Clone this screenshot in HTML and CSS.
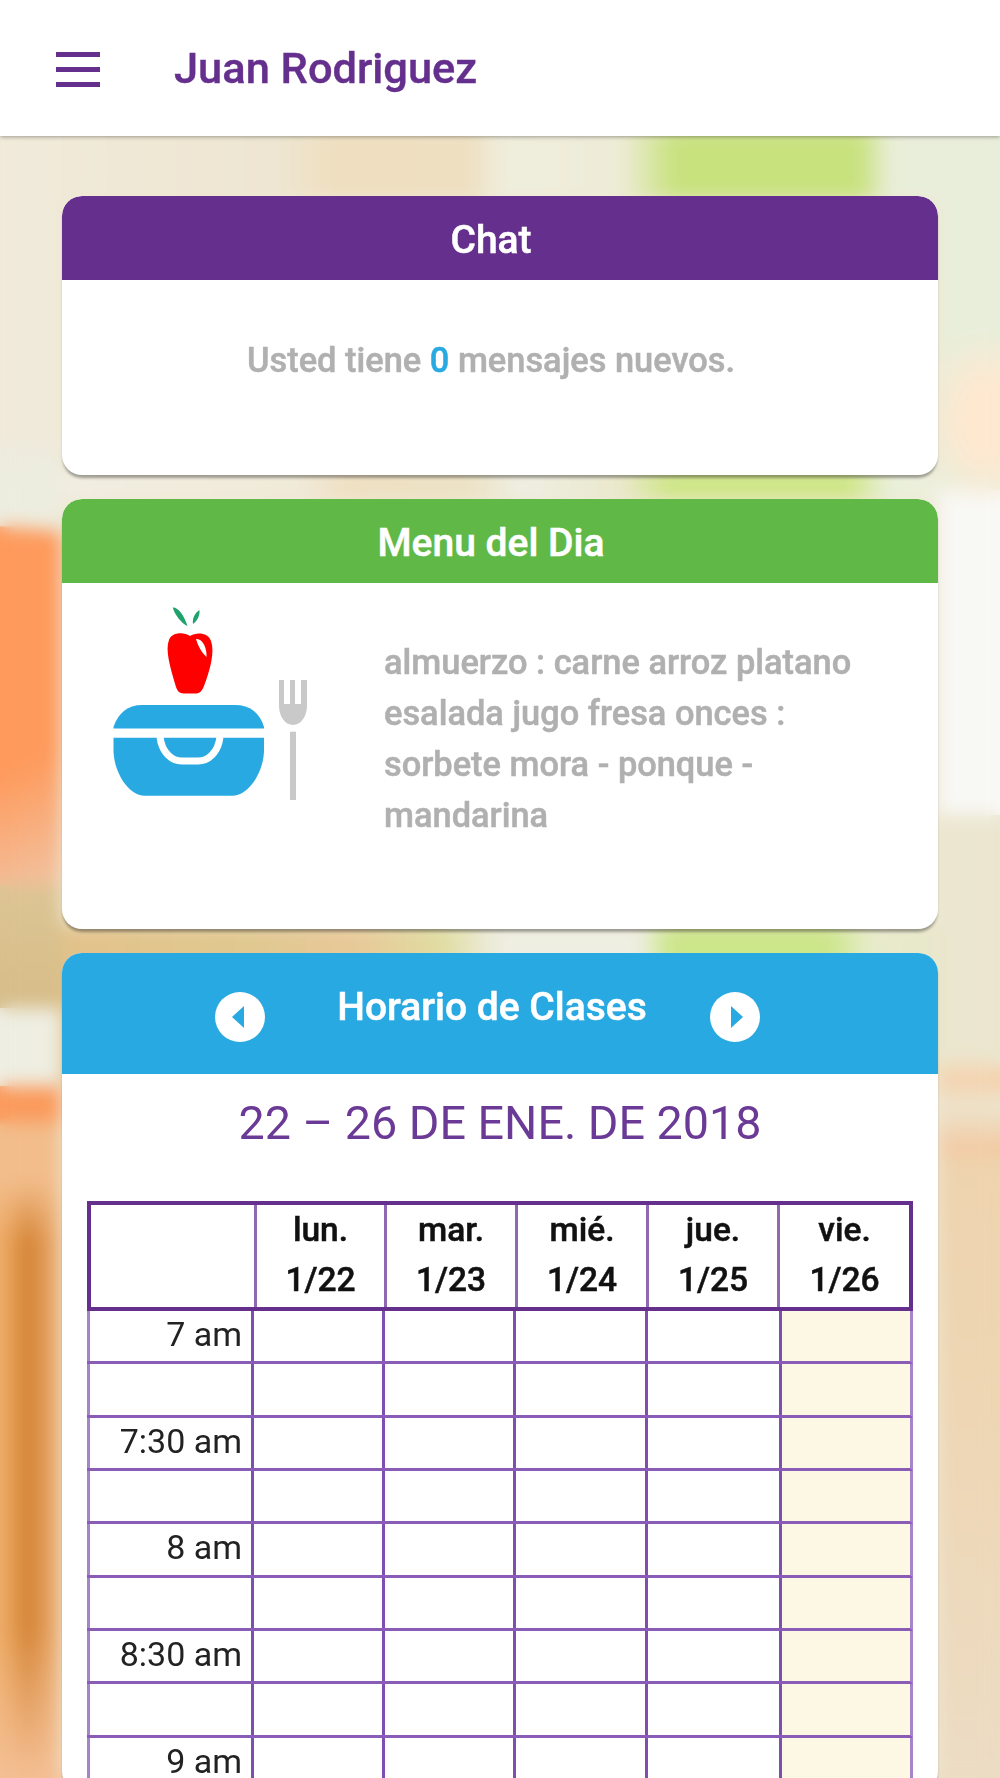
FILE: index.html
```html
<!DOCTYPE html>
<html lang="es">
<head>
    <meta http-equiv="Content-Type" content="text/html; charset=utf-8">
    <meta name="viewport" content="width=device-width, initial-scale=1.0">
    <title>Juan Rodriguez</title>
    <link rel="stylesheet" href="styles.css">
</head>
<body>
    <div class="bg-blur"></div>

    <div class="topbar">
        <div class="burger"><span></span><span></span><span></span></div>
        <span class="topbar-title">Juan Rodriguez</span>
    </div>

    <div class="content">
        <div class="card">
            <div class="card-head head-purple">Chat</div>
            <div class="chat-body">Usted tiene <span class="count">0</span> mensajes nuevos.</div>
        </div>

        <div class="card">
            <div class="card-head head-green">Menu del Dia</div>
            <div class="menu-body">
                <svg class="menu-icon" viewBox="0 0 200 200" width="200" height="200">
                    <path fill="#1fa36b" d="M62.7 2.5C68 2 74 10 77.5 21C71 18 65 10 62.7 2.5Z"/>
                    <path fill="#1fa36b" d="M89.5 5C90 11 87 16 83 19C82 13 85 8 89.5 5Z"/>
                    <path fill="#ff0000" d="M80 31C74 27 62 27 59 35C55 45 60 62 66 82C68 88 71 88.5 75 88.5L85 88.5C90 88.5 92 86 94 81C100 65 105 47 101 36C98 27 86 27 80 31Z"/>
                    <path fill="#ffffff" d="M86 34C92 33 97 42 96.5 52C92 48 88 41 86 34Z"/>
                    <path fill="#29a9e1" d="M3.5 122C8 108 18 100 32 100H125C140 100 150 108 154 122V123.5H3.5Z"/>
                    <path fill="#29a9e1" d="M3.5 132.7H154V145C154 165 140 190.7 122 190.7H35C17 190.7 3.5 165 3.5 145Z"/>
                    <path fill="none" stroke="#ffffff" stroke-width="7" d="M50 132C52 148 62 156 72 156H88C98 156 108 148 110 132"/>
                    <path fill="#c9c9c9" d="M169 75h5v24h6V75h5v24h6V75h6v26c0 10-6 19-14 19s-14-9-14-19z"/>
                    <rect fill="#c9c9c9" x="180" y="126.7" width="6" height="68.3"/>
                </svg>
                <p class="menu-text">almuerzo : carne arroz platano esalada jugo fresa onces : sorbete mora - ponque - mandarina</p>
            </div>
        </div>

        <div class="card">
            <div class="card-head head-blue">
                <span class="round-btn"><span class="arrow-left"></span></span>
                <span class="head-title">Horario de Clases</span>
                <span class="round-btn"><span class="arrow-right"></span></span>
            </div>
            <div class="schedule">
                <h2 class="week-title">22 – 26 DE ENE. DE 2018</h2>

                <div class="day-head">
                    <div class="day-cell"></div>
                    <div class="day-cell">lun.<br>1/22</div>
                    <div class="day-cell">mar.<br>1/23</div>
                    <div class="day-cell">mié.<br>1/24</div>
                    <div class="day-cell">jue.<br>1/25</div>
                    <div class="day-cell">vie.<br>1/26</div>
                </div>

                <div class="time-row"><div class="time-cell">7 am</div><div></div><div></div><div></div><div></div><div class="today"></div></div>
                <div class="time-row"><div class="time-cell"></div><div></div><div></div><div></div><div></div><div class="today"></div></div>
                <div class="time-row"><div class="time-cell">7:30 am</div><div></div><div></div><div></div><div></div><div class="today"></div></div>
                <div class="time-row"><div class="time-cell"></div><div></div><div></div><div></div><div></div><div class="today"></div></div>
                <div class="time-row"><div class="time-cell">8 am</div><div></div><div></div><div></div><div></div><div class="today"></div></div>
                <div class="time-row"><div class="time-cell"></div><div></div><div></div><div></div><div></div><div class="today"></div></div>
                <div class="time-row"><div class="time-cell">8:30 am</div><div></div><div></div><div></div><div></div><div class="today"></div></div>
                <div class="time-row"><div class="time-cell"></div><div></div><div></div><div></div><div></div><div class="today"></div></div>
                <div class="time-row"><div class="time-cell">9 am</div><div></div><div></div><div></div><div></div><div class="today"></div></div>
            </div>
        </div>
    </div>
</body>
</html>
```

FILE: styles.css
```css
/* Page: blurred photo rebuilt from gradients */
html, body {
    height: 1778px;
    overflow: hidden;
}

body {
    margin: 0;
    font-family: "Roboto", "Liberation Sans", sans-serif;
    background-color: #efe8d4;
    background-repeat: no-repeat;
    background-image:
        /* left side, stripes at the bottom */
        linear-gradient(180deg, #f2bd8b, rgba(242, 189, 139, 0)),
        linear-gradient(180deg, rgba(244, 192, 145, 0) 75%, #f4c095),
        linear-gradient(90deg, #efae6c 0, #e8a35c 12px, #d07d2c 25px, #dc924a 38px, #f0b37c 62px),
        linear-gradient(180deg, #fb9a5c 0, #fb9a5c 32px, #f2bd8b 40px, #f2bd8b 100%),
        linear-gradient(180deg, #eeeee2, #eeeee2),
        linear-gradient(180deg, #dcc594, #d6bc88),
        /* orange shape on the left */
        linear-gradient(335deg, rgba(240, 200, 170, 0.9) 0, rgba(253, 165, 115, 0) 35%),
        linear-gradient(185deg, rgba(254, 154, 92, 0) 0, rgba(254, 154, 92, 0) 10%, #fe9a5c 10.5%, #fe9a5c 100%),
        linear-gradient(180deg, #f0eada 0, #f0eada 310px, #ececdf 330px, #ededde 100%),
        /* right side */
        linear-gradient(180deg, #eed3ae 0, #eed6b4 40%, #ecdcc4 100%),
        linear-gradient(180deg, #ebe6cf 0, #ebe6cf 70%, #f6d0aa 76%, #ece4cd 84%, #f3c9a2 97%, #eed3ae 100%),
        radial-gradient(ellipse 60px 90px at 75% 50%, #fee8d0 40%, rgba(253, 227, 196, 0) 100%),
        linear-gradient(180deg, #f8f8f5, #f8f8f5),
        linear-gradient(180deg, #e9eeda, #e9eeda),
        /* bands between the cards */
        linear-gradient(90deg, #e3c088 0, #e0c890 25%, #e8c898 35%, #e0dca0 44%, #eeeee2 50%, #eeeee2 64%, #cce68a 67%, #cce68a 83%, #e8eccc 87%, #e8e2c8 100%),
        linear-gradient(90deg, #f2efe4 0, #f0ead9 30%, #efdfc0 35%, #ece2c4 47%, #efefe4 52%, #eae8cc 62%, #cde683 67%, #cde683 85%, #e9f0dc 89%, #f5efdc 100%),
        linear-gradient(90deg, #f0ead9 0, #eee6d2 28%, #efdfc0 33%, #eedfc0 47%, #efeddd 50%, #eeecd8 62%, #c8e27e 67.5%, #c8e27e 86%, #e9eeda 89%, #e9eeda 100%);
    background-size:
        62px 60px,
        62px 600px,
        62px 600px,
        62px 95px,
        62px 78px,
        62px 125px,
        62px 370px,
        62px 400px,
        62px 400px,
        62px 620px,
        62px 346px,
        62px 160px,
        62px 325px,
        62px 360px,
        100% 160px,
        100% 30px,
        100% 70px;
    background-position:
        0 1180px,
        0 1180px,
        0 1180px,
        0 1086px,
        0 1008px,
        0 885px,
        0 515px,
        0 490px,
        0 130px,
        938px 1160px,
        938px 815px,
        938px 340px,
        938px 490px,
        938px 130px,
        0 925px,
        0 470px,
        0 130px;
}

/* Softens the gradients above */
.bg-blur {
    position: fixed;
    inset: 0;
    backdrop-filter: blur(9px);
}

/* Top bar */
.topbar {
    position: relative;
    z-index: 1;
    display: flex;
    align-items: center;
    height: 136px;
    padding-left: 56px;
    box-sizing: border-box;
    background-color: #fff;
    box-shadow: 0 1px 4px rgba(0, 0, 0, 0.35);
}

.burger {
    display: flex;
    flex-direction: column;
    gap: 10.5px;
    width: 44px;
    margin-top: 3px;
    margin-right: 74px;
    filter: blur(0.6px);
}

.burger span {
    height: 4.5px;
    background-color: #652f8d;
}

.topbar-title {
    font-size: 43.4px;
    font-weight: 500;
    color: #652f8d;
    filter: blur(0.6px);
    -webkit-text-stroke: 0.4px #652f8d;
}

/* Cards */
.content {
    position: relative;
    display: flex;
    flex-direction: column;
    gap: 24px;
    padding: 60px 62px 0 62px;
    filter: blur(0.6px);
}

.card {
    border-radius: 20px;
    background-color: #fff;
    box-shadow: 0 4px 3px -1px rgba(0, 0, 0, 0.35);
    overflow: hidden;
}

.card:last-child {
    overflow: visible;
}

.card-head {
    height: 84px;
    padding-right: 18px;
    line-height: 89px;
    text-align: center;
    font-size: 39px;
    font-weight: 500;
    color: #fff;
    border-radius: 20px 20px 0 0;
    -webkit-text-stroke: 0.5px #fff;
}

.head-purple {
    background-color: #652f8d;
}

.head-green {
    background-color: #60b946;
}

.head-blue {
    display: flex;
    justify-content: center;
    height: 121px;
    padding-right: 25px;
    line-height: normal;
    background-color: #29a9e1;
}

.head-title {
    padding: 31px 63px 0 72px;
}

/* Chat */
.chat-body {
    height: 195px;
    padding-top: 60px;
    padding-right: 18px;
    box-sizing: border-box;
    text-align: center;
    font-size: 34.4px;
    font-weight: 500;
    color: #b0b0b0;
    -webkit-text-stroke: 0.5px currentColor;
}

.count {
    color: #29a9e1;
}

/* Menu */
.menu-body {
    display: flex;
    height: 346px;
}

.menu-icon {
    flex-shrink: 0;
    margin: 22px 0 0 48px;
}

.menu-text {
    margin: 54px 0 0 74px;
    width: 480px;
    font-size: 34.4px;
    font-weight: 500;
    line-height: 51px;
    color: #b0b0b0;
    -webkit-text-stroke: 0.5px currentColor;
}

/* Round arrows of the schedule */
.round-btn {
    display: flex;
    align-items: center;
    justify-content: center;
    width: 50px;
    height: 50px;
    margin-top: 39px;
    border-radius: 50%;
    background-color: #fff;
}

.arrow-left {
    border-top: 11px solid transparent;
    border-bottom: 11px solid transparent;
    border-right: 12px solid #29a9e1;
    margin-right: 5px;
}

.arrow-right {
    border-top: 11px solid transparent;
    border-bottom: 11px solid transparent;
    border-left: 12px solid #29a9e1;
    margin-left: 5px;
}

/* Schedule */
.schedule {
    padding: 0 25px;
}

.week-title {
    margin: 0;
    height: 127px;
    padding-top: 22px;
    box-sizing: border-box;
    text-align: center;
    font-size: 46.7px;
    font-weight: 400;
    color: #6b3a96;
}

.day-head {
    display: grid;
    grid-template-columns: 163px 130px 131px 131px 131px 1fr;
    height: 110px;
    box-sizing: border-box;
    border: 4px solid #652f8d;
}

.day-cell {
    border-left: 3px solid #8f67b3;
    text-align: center;
    font-size: 33.5px;
    font-weight: 500;
    line-height: 50px;
    color: #111;
    -webkit-text-stroke: 0.5px #111;
}

.day-cell:first-child {
    border-left: none;
}

.time-row {
    display: grid;
    grid-template-columns: 164px 131px 131px 132px 134px 1fr;
    height: 53.33px;
    box-sizing: border-box;
    border-right: 3px solid #a585c8;
    border-bottom: 3px solid #8a5cb8;
}

.time-row > div {
    border-left: 3px solid #7f4fb0;
}

.time-row > .time-cell {
    border-left-color: #a585c8;
    padding-right: 9px;
    text-align: right;
    font-size: 34px;
    line-height: 47px;
    color: #222;
}

.time-row > .today {
    background-color: #fcf8e3;
}
```
